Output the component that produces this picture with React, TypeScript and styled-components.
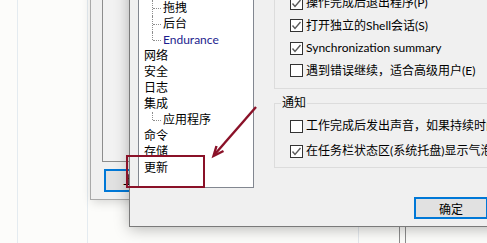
import styled, { createGlobalStyle } from 'styled-components';

const GlobalStyle = createGlobalStyle`
  html, body {
    margin: 0;
    padding: 0;
    background: #fcfcfa;
  }
  body {
    font-family: "Lato", "Noto Sans CJK SC", sans-serif;
    font-size: 12px;
  }
`;

interface TreeItem {
  label: string;
  depth: number;
  last?: boolean;
  accent?: boolean;
}

const treeItems: TreeItem[] = [
  { label: '连接', depth: 0 },
  { label: '传输', depth: 0 },
  { label: '拖拽', depth: 1 },
  { label: '后台', depth: 1 },
  { label: 'Endurance', depth: 1, last: true, accent: true },
  { label: '网络', depth: 0 },
  { label: '安全', depth: 0 },
  { label: '日志', depth: 0 },
  { label: '集成', depth: 0 },
  { label: '应用程序', depth: 1, last: true },
  { label: '命令', depth: 0 },
  { label: '存储', depth: 0 },
  { label: '更新', depth: 0 },
];

const generalOptions = [
  { label: '操作完成后退出程序(P)', checked: true },
  { label: '打开独立的Shell会话(S)', checked: true },
  { label: 'Synchronization summary', checked: true },
  { label: '遇到错误继续，适合高级用户(E)', checked: false },
];

const notifyOptions = [
  { label: '工作完成后发出声音，如果持续时间超过', checked: false },
  { label: '在任务栏状态区(系统托盘)显示气泡提示', checked: true },
];

function CheckBox({ checked }: { checked: boolean }): JSX.Element {
  return (
    <Box>
      {checked && (
        <svg width="11" height="11" viewBox="0 0 11 11">
          <polyline
            points="1.5,5.5 4,8.5 9.5,2"
            fill="none"
            stroke="#5a5a5a"
            strokeWidth="1.4"
          />
        </svg>
      )}
    </Box>
  );
}

export default function App(): JSX.Element {
  return (
    <>
      <GlobalStyle />
      <Desktop>
        <BackWindow>
          <BackPanel />
          <BackButton>上</BackButton>
        </BackWindow>

        <FrontWindow>
          <MainRow>
            <TreeList>
              {treeItems.map((item) => (
                <TreeRow
                  key={item.label}
                  $depth={item.depth}
                  $last={!!item.last}
                  $accent={!!item.accent}
                >
                  {item.label}
                </TreeRow>
              ))}
            </TreeList>

            <RightColumn>
              <GroupBox $grow>
                {generalOptions.map((opt) => (
                  <OptionRow key={opt.label} $height={22.5}>
                    <CheckBox checked={opt.checked} />
                    <OptionText>{opt.label}</OptionText>
                  </OptionRow>
                ))}
              </GroupBox>
              <NotifyGroup>
                <Legend>通知</Legend>
                {notifyOptions.map((opt) => (
                  <OptionRow key={opt.label} $height={22}>
                    <CheckBox checked={opt.checked} />
                    <OptionText>{opt.label}</OptionText>
                  </OptionRow>
                ))}
              </NotifyGroup>
            </RightColumn>
          </MainRow>

          <ButtonRow>
            <DialogButton $focused>确定</DialogButton>
            <DialogButton>取消</DialogButton>
          </ButtonRow>
        </FrontWindow>

        <Highlight />
        <Arrow width="60" height="60" viewBox="205 104 60 60">
          <line
            x1="256"
            y1="107"
            x2="215"
            y2="154"
            stroke="#8a1128"
            strokeWidth="2.4"
          />
          <polyline
            points="216.5,146 213.5,156 223.5,151"
            fill="none"
            stroke="#8a1128"
            strokeWidth="2.4"
            strokeLinejoin="miter"
          />
        </Arrow>
      </Desktop>
    </>
  );
}

const Desktop = styled.div`
  position: relative;
  width: 487px;
  height: 243px;
  overflow: hidden;
  background: linear-gradient(
    to right,
    transparent 17px,
    #e4ebf0 17px,
    #e4ebf0 18px,
    transparent 18px,
    transparent 87px,
    #e4ebf0 87px,
    #e4ebf0 88px,
    transparent 88px,
    transparent 358px,
    #e2e7ec 358px,
    #e2e7ec 359px,
    transparent 359px,
    transparent 399px,
    #8c8c8c 399px,
    #8c8c8c 400px,
    transparent 400px,
    transparent 405px,
    #8c8c8c 405px,
    #8c8c8c 406px,
    transparent 406px
  );
`;

const BackWindow = styled.div`
  position: absolute;
  left: 90px;
  top: -20px;
  width: 140px;
  height: 220px;
  box-sizing: border-box;
  display: flex;
  flex-direction: column;
  padding: 0 0 7px 11px;
  background: #f0f0f0;
  border: 1px solid #a9a9a9;
  box-shadow: 2px 2px 10px rgba(0, 0, 0, 0.16);
`;

const BackPanel = styled.div`
  flex: 1;
  border: 1px solid #8d8d8d;
  border-right: none;
  background: #f2f2f2;
  margin-bottom: 7px;
`;

const BackButton = styled.div`
  width: 80px;
  height: 23px;
  box-sizing: border-box;
  margin-left: 2px;
  padding-left: 17px;
  border: 2px solid #0078d7;
  background: #e1e1e1;
  line-height: 19px;
  color: #000;
`;

const FrontWindow = styled.div`
  position: absolute;
  left: 129px;
  top: -41px;
  width: 451px;
  box-sizing: border-box;
  display: flex;
  flex-direction: column;
  padding: 7px 8px 7px 8px;
  background: #f0f0f0;
  border: 1px solid #7a7a7a;
  box-shadow: 0 2px 14px rgba(0, 0, 0, 0.28);
  overflow: hidden;
`;

const MainRow = styled.div`
  display: flex;
  gap: 20px;
`;

const TreeList = styled.div`
  width: 116px;
  height: 221px;
  box-sizing: border-box;
  flex-shrink: 0;
  padding: 0 0 0 5px;
  background: #fff;
  border: 1px solid #828790;
  overflow: hidden;
`;

const TreeRow = styled.div<{ $depth: number; $last: boolean; $accent: boolean }>`
  position: relative;
  height: 16px;
  line-height: 16px;
  padding-left: ${({ $depth }) => $depth * 19}px;
  color: ${({ $accent }) => ($accent ? '#1c1c8e' : '#000')};
  white-space: nowrap;

  &::before,
  &::after {
    display: ${({ $depth }) => ($depth > 0 ? 'block' : 'none')};
    content: '';
    position: absolute;
  }
  &::before {
    left: 8px;
    top: 0;
    height: ${({ $last }) => ($last ? 8 : 16)}px;
    border-left: 1px dotted #8e8e8e;
  }
  &::after {
    left: 9px;
    top: 8px;
    width: 8px;
    border-top: 1px dotted #8e8e8e;
  }
`;

const RightColumn = styled.div`
  flex: 1;
  display: flex;
  flex-direction: column;
  padding-bottom: 20px;
`;

const GroupBox = styled.div<{ $grow?: boolean }>`
  position: relative;
  flex: ${({ $grow }) => ($grow ? 1 : '0 0 auto')};
  display: flex;
  flex-direction: column;
  justify-content: flex-end;
  padding: 0 0 6px 15px;
  border: 1px solid #dcdcdc;
`;

const NotifyGroup = styled(GroupBox)`
  margin-top: 14px;
  gap: 3px;
  padding: 11px 0 5px 15px;
`;

const Legend = styled.span`
  position: absolute;
  left: 6px;
  top: -9px;
  padding: 0 1px;
  line-height: 16px;
  background: #f0f0f0;
  color: #000;
`;

const OptionRow = styled.div<{ $height: number }>`
  display: flex;
  align-items: center;
  gap: 3px;
  height: ${({ $height }) => $height}px;
  white-space: nowrap;
`;

const Box = styled.span`
  width: 13px;
  height: 13px;
  box-sizing: border-box;
  flex-shrink: 0;
  display: flex;
  align-items: center;
  justify-content: center;
  border: 1px solid #333;
  background: #fff;
`;

const OptionText = styled.span`
  color: #000;
  line-height: 16px;
`;

const ButtonRow = styled.div`
  display: flex;
  justify-content: flex-end;
  gap: 9px;
  margin-top: 9px;
`;

const DialogButton = styled.div<{ $focused?: boolean }>`
  width: 74px;
  height: 22px;
  box-sizing: border-box;
  display: flex;
  align-items: center;
  justify-content: center;
  background: #e1e1e1;
  border: ${({ $focused }) => ($focused ? '2px solid #0078d7' : '1px solid #adadad')};
  color: #000;
`;

const Highlight = styled.div`
  position: absolute;
  left: 126px;
  top: 155px;
  width: 79px;
  height: 33px;
  box-sizing: border-box;
  border: 2px solid #8a1128;
`;

const Arrow = styled.svg`
  position: absolute;
  left: 205px;
  top: 104px;
`;
